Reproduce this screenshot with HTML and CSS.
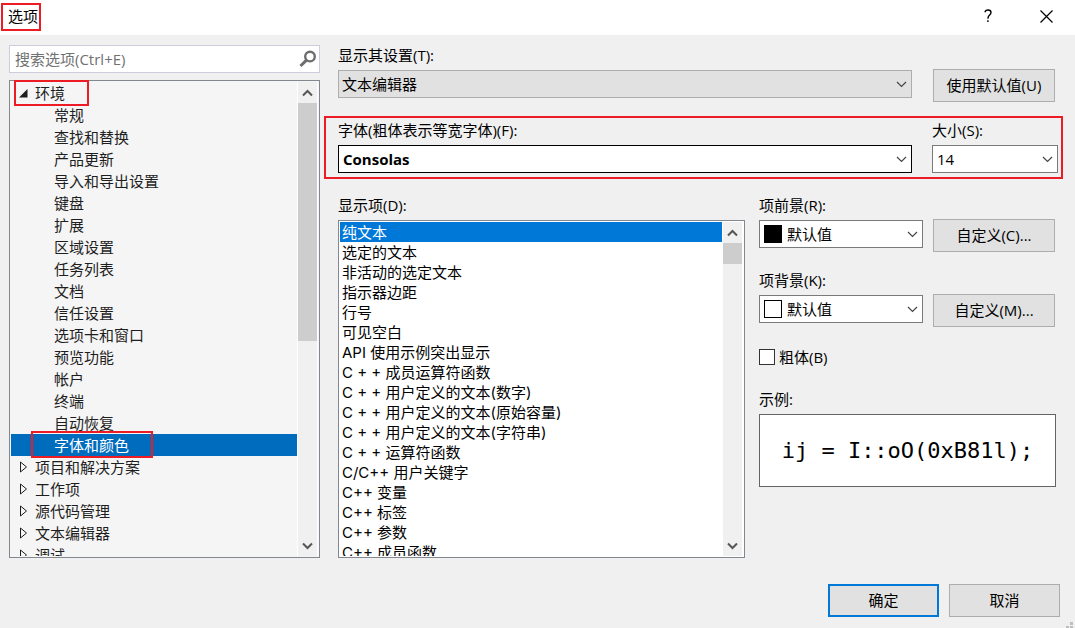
FILE: index.html
```html
<!DOCTYPE html>
<html lang="zh-CN">
<head>
<meta charset="utf-8">
<meta name="viewport" content="width=device-width, initial-scale=1">
<title>选项</title>
<link rel="stylesheet" href="styles.css">
</head>
<body>
<div class="dialog" role="dialog" aria-labelledby="dialog-title">
  <header class="titlebar">
    <h1 class="title" id="dialog-title">选项<span class="mark mark-title"></span></h1>
    <button class="caption-btn" type="button" aria-label="帮助"><svg width="9" height="14" viewBox="0 0 9 14" fill="none" stroke="#000" stroke-width="1.4"><path d="M1.2 3.2V2.4C1.6 1.5 2.6 1 4 1C5.8 1 7 2 7 3.6C7 6 4 6.2 4 9.2V9.8"/><path d="M3.9 11.3V13"/></svg></button>
    <button class="caption-btn" type="button" aria-label="关闭"><svg width="13" height="13" viewBox="0 0 13 13" fill="none" stroke="#000" stroke-width="1.2"><path d="M.5 .5L12.5 12.5M12.5 .5L.5 12.5"/></svg></button>
  </header>

  <main class="content">
    <nav class="sidebar">
      <div class="search">
        <input class="search-input" type="search" placeholder="搜索选项(Ctrl+E)" aria-label="搜索选项">
        <svg class="search-icon" width="18" height="18" viewBox="0 0 18 18" fill="none" stroke="#6d6d6d"><circle cx="11" cy="6.6" r="4.8" stroke-width="2.4"/><path d="M7.5 10.2L1.5 16" stroke-width="3"/></svg>
      </div>
      <div class="panel tree-panel">
        <ul class="tree" role="tree" aria-label="选项类别">
          <li class="node" role="treeitem" aria-expanded="true"><svg class="twist" width="9" height="9" viewBox="0 0 9 9"><path d="M8.5 0V8.5H0Z" fill="#1e1e1e"/></svg>环境</li>
          <li class="leaf" role="treeitem">常规</li>
          <li class="leaf" role="treeitem">查找和替换</li>
          <li class="leaf" role="treeitem">产品更新</li>
          <li class="leaf" role="treeitem">导入和导出设置</li>
          <li class="leaf" role="treeitem">键盘</li>
          <li class="leaf" role="treeitem">扩展</li>
          <li class="leaf" role="treeitem">区域设置</li>
          <li class="leaf" role="treeitem">任务列表</li>
          <li class="leaf" role="treeitem">文档</li>
          <li class="leaf" role="treeitem">信任设置</li>
          <li class="leaf" role="treeitem">选项卡和窗口</li>
          <li class="leaf" role="treeitem">预览功能</li>
          <li class="leaf" role="treeitem">帐户</li>
          <li class="leaf" role="treeitem">终端</li>
          <li class="leaf" role="treeitem">自动恢复</li>
          <li class="leaf selected" role="treeitem" aria-selected="true">字体和颜色</li>
          <li class="node" role="treeitem" aria-expanded="false"><svg class="twist" width="9" height="12" viewBox="0 0 9 12"><path d="M1.5 1V11L7.5 6Z" fill="none" stroke="#1e1e1e"/></svg>项目和解决方案</li>
          <li class="node" role="treeitem" aria-expanded="false"><svg class="twist" width="9" height="12" viewBox="0 0 9 12"><path d="M1.5 1V11L7.5 6Z" fill="none" stroke="#1e1e1e"/></svg>工作项</li>
          <li class="node" role="treeitem" aria-expanded="false"><svg class="twist" width="9" height="12" viewBox="0 0 9 12"><path d="M1.5 1V11L7.5 6Z" fill="none" stroke="#1e1e1e"/></svg>源代码管理</li>
          <li class="node" role="treeitem" aria-expanded="false"><svg class="twist" width="9" height="12" viewBox="0 0 9 12"><path d="M1.5 1V11L7.5 6Z" fill="none" stroke="#1e1e1e"/></svg>文本编辑器</li>
          <li class="node" role="treeitem" aria-expanded="false"><svg class="twist" width="9" height="12" viewBox="0 0 9 12"><path d="M1.5 1V11L7.5 6Z" fill="none" stroke="#1e1e1e"/></svg>调试</li>
        </ul>
        <div class="scrollbar">
          <button class="scroll-btn" type="button" aria-label="向上滚动"><svg width="11" height="8" viewBox="0 0 11 8" fill="none" stroke="#555" stroke-width="2"><path d="M1 6.5L5.5 2L10 6.5"/></svg></button>
          <div class="track"><div class="thumb thumb-tree"></div></div>
          <button class="scroll-btn" type="button" aria-label="向下滚动"><svg width="11" height="8" viewBox="0 0 11 8" fill="none" stroke="#555" stroke-width="2"><path d="M1 1.5L5.5 6L10 1.5"/></svg></button>
        </div>
        <span class="mark mark-env"></span>
        <span class="mark mark-fonts"></span>
      </div>
    </nav>

    <section class="settings">
      <div class="row">
        <div class="field">
          <label for="scope">显示其设置(T):</label>
          <div class="combo combo-flat">
            <select id="scope"><option>文本编辑器</option></select>
            <svg class="chevron" width="11" height="7" viewBox="0 0 11 7"><path d="M1 1L5.5 5.5L10 1"/></svg>
          </div>
        </div>
        <button class="btn side-btn" type="button">使用默认值(U)</button>
      </div>

      <div class="row">
        <div class="field">
          <label for="font">字体(粗体表示等宽字体)(F):</label>
          <div class="combo combo-strong">
            <select id="font"><option>Consolas</option></select>
            <svg class="chevron" width="11" height="7" viewBox="0 0 11 7"><path d="M1 1L5.5 5.5L10 1"/></svg>
          </div>
        </div>
        <div class="field">
          <label for="size">大小(S):</label>
          <div class="combo">
            <select id="size"><option>14</option></select>
            <svg class="chevron" width="11" height="7" viewBox="0 0 11 7"><path d="M1 1L5.5 5.5L10 1"/></svg>
          </div>
        </div>
        <span class="mark mark-row"></span>
      </div>

      <div class="lower">
        <div class="field items">
          <span class="label" id="items-label">显示项(D):</span>
          <div class="panel list-panel">
            <ul class="list" role="listbox" aria-labelledby="items-label">
              <li class="item active" role="option" aria-selected="true">纯文本</li>
              <li class="item" role="option">选定的文本</li>
              <li class="item" role="option">非活动的选定文本</li>
              <li class="item" role="option">指示器边距</li>
              <li class="item" role="option">行号</li>
              <li class="item" role="option">可见空白</li>
              <li class="item" role="option">API 使用示例突出显示</li>
              <li class="item" role="option">C + + 成员运算符函数</li>
              <li class="item" role="option">C + + 用户定义的文本(数字)</li>
              <li class="item" role="option">C + + 用户定义的文本(原始容量)</li>
              <li class="item" role="option">C + + 用户定义的文本(字符串)</li>
              <li class="item" role="option">C + + 运算符函数</li>
              <li class="item" role="option">C/C++ 用户关键字</li>
              <li class="item" role="option">C++ 变量</li>
              <li class="item" role="option">C++ 标签</li>
              <li class="item" role="option">C++ 参数</li>
              <li class="item" role="option">C++ 成员函数</li>
            </ul>
            <div class="scrollbar">
              <button class="scroll-btn" type="button" aria-label="向上滚动"><svg width="11" height="8" viewBox="0 0 11 8" fill="none" stroke="#555" stroke-width="2"><path d="M1 6.5L5.5 2L10 6.5"/></svg></button>
              <div class="track"><div class="thumb thumb-list"></div></div>
              <button class="scroll-btn" type="button" aria-label="向下滚动"><svg width="11" height="8" viewBox="0 0 11 8" fill="none" stroke="#555" stroke-width="2"><path d="M1 1.5L5.5 6L10 1.5"/></svg></button>
            </div>
          </div>
        </div>

        <div class="colors">
          <div class="color-row">
            <div class="field">
              <label for="fg">项前景(R):</label>
              <div class="combo combo-swatch">
                <select id="fg"><option>默认值</option></select>
                <span class="swatch swatch-black"></span>
                <svg class="chevron" width="11" height="7" viewBox="0 0 11 7"><path d="M1 1L5.5 5.5L10 1"/></svg>
              </div>
            </div>
            <button class="btn side-btn" type="button">自定义(C)...</button>
          </div>
          <div class="color-row">
            <div class="field">
              <label for="bg">项背景(K):</label>
              <div class="combo combo-swatch">
                <select id="bg"><option>默认值</option></select>
                <span class="swatch"></span>
                <svg class="chevron" width="11" height="7" viewBox="0 0 11 7"><path d="M1 1L5.5 5.5L10 1"/></svg>
              </div>
            </div>
            <button class="btn side-btn" type="button">自定义(M)...</button>
          </div>
          <label class="check"><input type="checkbox">粗体(B)</label>
          <div class="field sample-field">
            <span class="label">示例:</span>
            <output class="sample">ij = I::oO(0xB81l);</output>
          </div>
        </div>
      </div>
    </section>
  </main>

  <footer class="actions">
    <button class="btn action primary" type="button">确定</button>
    <button class="btn action" type="button">取消</button>
    <svg class="grip" width="8" height="6" viewBox="0 0 8 6" fill="#bfbfbf"><path d="M5 0h3v3H5zM1 4h3v2H1zM5 4h3v2H5z"/></svg>
  </footer>
</div>
</body>
</html>
```
FILE: styles.css
```css
* { box-sizing: border-box; }

body {
  margin: 0;
  background: #f0f0f0;
  color: #000;
  font: 15px/20px "Open Sans", "Noto Sans CJK SC", sans-serif;
}

button, input, select { font: inherit; color: inherit; }

ul { margin: 0; padding: 0; list-style: none; }

.dialog {
  display: flex;
  flex-direction: column;
  height: 100vh;
}

/* Title bar */
.titlebar {
  display: flex;
  align-items: center;
  height: 35px;
  flex: none;
  padding-bottom: 3px;
  background: #fff;
}
.title {
  position: relative;
  margin: 0 auto 0 8px;
  font-size: 15px;
  font-weight: 400;
}
.caption-btn {
  display: grid;
  place-items: center;
  width: 58px;
  height: 32px;
  padding: 0;
  border: 0;
  background: none;
}

/* Main area */
.content {
  display: grid;
  grid-template-columns: 311px minmax(0, 1fr);
  gap: 18px;
  flex: 1;
  min-height: 0;
  padding: 10px 17px 0 9px;
}
.sidebar {
  display: flex;
  flex-direction: column;
  gap: 7px;
  min-height: 0;
}
.search {
  display: flex;
  align-items: center;
  height: 28px;
  flex: none;
  padding: 0 2px 0 5px;
  border: 1px solid #cccedb;
  background: #fff;
}
.search-input {
  flex: 1;
  min-width: 0;
  padding: 0;
  border: 0;
  outline: 0;
  background: none;
  appearance: none;
}
.search-input::placeholder { color: #717171; opacity: 1; }

/* Scrolling panels */
.panel {
  display: flex;
  flex: 1;
  min-height: 0;
  padding: 1px;
  border: 1px solid #828790;
}
.tree-panel { position: relative; background: #f5f5f5; }
.list-panel { background: #fff; }
.tree, .list {
  flex: 1;
  min-width: 0;
  overflow: hidden;
  white-space: nowrap;
}
.tree { color: #1e1e1e; }
.node, .leaf {
  display: flex;
  align-items: center;
  height: 22px;
}
.node { gap: 7px; padding-left: 8px; }
.leaf { padding-left: 43px; }
.twist { width: 9px; flex: none; }
.selected { background: #006cbe; color: #fff; }
.list { font-family: Inter, "Noto Sans CJK SC", sans-serif; }
.item { height: 20px; padding-left: 2px; line-height: 22px; }
.active { background: #0078d7; color: #fff; }

.scrollbar {
  display: flex;
  flex-direction: column;
  width: 21px;
  flex: none;
  border: solid #fff;
  border-width: 0 1px;
  background: #f0f0f0;
}
.scroll-btn {
  display: grid;
  place-items: center;
  height: 21px;
  flex: none;
  padding: 0;
  border: 0;
  background: none;
}
.track { flex: 1; min-height: 0; }
.thumb { background: #cdcdcd; }
.thumb-tree { height: 55%; }
.thumb-list { height: 21px; }

/* Settings */
.settings {
  display: flex;
  flex-direction: column;
  gap: 22px;
  min-width: 0;
  min-height: 0;
}
.row {
  position: relative;
  display: grid;
  grid-template-columns: minmax(0, 1fr) 126px;
  gap: 20px;
  height: 53px;
  flex: none;
}
.field {
  display: flex;
  flex-direction: column;
  gap: 5px;
  min-width: 0;
  min-height: 0;
}
.combo {
  display: grid;
  align-items: center;
  height: 28px;
  border: 1px solid #7a7a7a;
  background: #fff;
}
.combo > * { grid-area: 1 / 1; }
.combo select {
  width: 100%;
  height: 100%;
  padding: 0 24px 1px 4px;
  border: 0;
  border-radius: 0;
  outline: 0;
  background: none;
  appearance: none;
}
.combo-flat { border-color: #adadad; background: #e1e1e1; }
.combo-flat select { padding-left: 3px; }
.combo-strong { border-color: #000; }
.combo-strong select { font-weight: 700; }
.combo-swatch select { padding-left: 27px; }
.chevron {
  justify-self: end;
  margin-right: 4px;
  fill: none;
  stroke: #444;
  stroke-width: 1.2;
  pointer-events: none;
}
.swatch {
  width: 18px;
  height: 18px;
  margin-left: 4px;
  border: 1px solid #000;
  background: #fff;
  pointer-events: none;
}
.swatch-black { background: #000; }

.btn {
  height: 33px;
  padding: 0 0 2px;
  border: 1px solid #adadad;
  background: #e1e1e1;
}
.side-btn { width: 122px; margin: 24px 0 0 1px; }

.lower {
  display: grid;
  grid-template-columns: minmax(0, 407fr) minmax(0, 299fr);
  gap: 14px;
  flex: 1;
  min-height: 0;
}
.items { height: 100%; }
.colors { display: flex; flex-direction: column; }
.color-row {
  display: grid;
  grid-template-columns: minmax(0, 1fr) 126px;
  gap: 9px;
  height: 75px;
}
.check {
  display: flex;
  align-items: center;
  gap: 4px;
  height: 23px;
}
.check input {
  width: 16px;
  height: 16px;
  margin: 0;
  border: 1px solid #333;
  background: #fff;
  appearance: none;
}
.sample-field { margin: 21px 2px 0 0; }
.sample {
  display: grid;
  place-items: center;
  height: 73px;
  border: 1px solid #646464;
  background: #fff;
  font: 22px/28px "DejaVu Sans Mono", monospace;
  white-space: pre;
}

/* Footer */
.actions {
  position: relative;
  display: flex;
  justify-content: flex-end;
  gap: 10px;
  flex: none;
  padding: 26px 15px 11px;
}
.action { width: 111px; }
.primary { border: 2px solid #0078d7; }
.grip { position: absolute; right: 2px; bottom: 0; }

/* Red highlight frames */
.mark {
  position: absolute;
  border: 2px solid #ed1c24;
  pointer-events: none;
}
.mark-title { inset: -3px -3px -5px -7px; }
.mark-env { left: 4px; top: -1px; width: 75px; height: 26px; }
.mark-fonts { left: 21px; top: 350px; width: 122px; height: 27px; }
.mark-row { inset: -4px -5px -6px -14px; }
```
